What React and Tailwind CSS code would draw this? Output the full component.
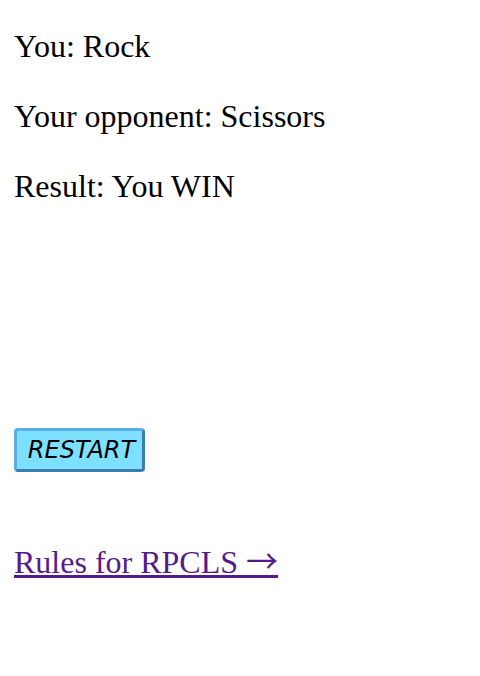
import React, { useState } from "react";

const App = () => {
  const [you] = useState("Rock");
  const [opponent] = useState("Scissors");

  return (
    <div className="min-h-screen bg-white pl-[14px] pt-[28px] text-black font-['Liberation_Serif','Times_New_Roman',serif]">
      <div className="flex flex-col gap-[33px] text-[32px] leading-[37px]">
        <p>You: {you}</p>
        <p>Your opponent: {opponent}</p>
        <p>Result: You WIN</p>
      </div>
      <button
        className="mt-[223px] flex h-[44px] w-[131px] items-center justify-center rounded-[4px] border-[3px] border-t-[#5aaee0] border-l-[#5aaee0] border-b-[#3e7ca9] border-r-[#3e7ca9] bg-[#7ee0ff] pl-[4px] font-['DejaVu_Sans',Verdana,sans-serif] text-[24px] italic leading-[28px] text-black"
      >
        RESTART
      </button>
      <div className="mt-[71px] text-[32px] leading-[37px]">
        <a href="#" className="text-[#551a8b] underline">
          Rules for RPCLS <span className="font-['Noto_Sans_CJK_SC',serif] leading-none">→</span>
        </a>
      </div>
    </div>
  );
};

export default App;
